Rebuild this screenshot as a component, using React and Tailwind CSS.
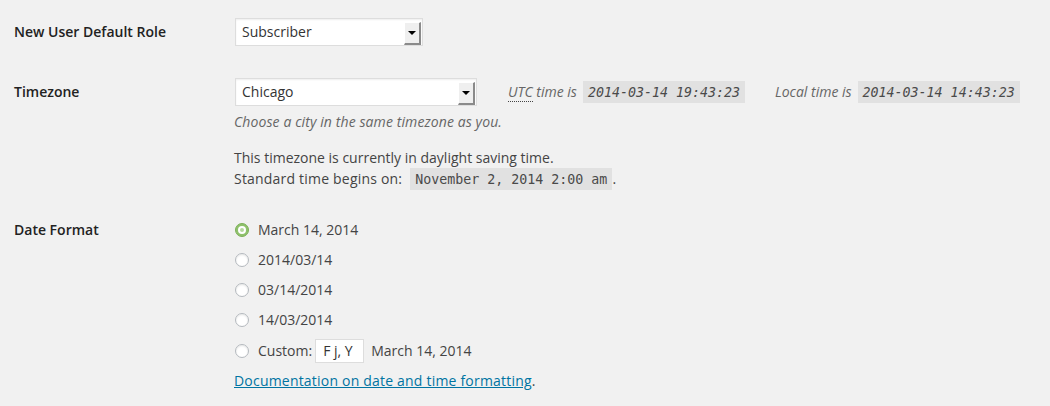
import React from "react";

const SelectBox = ({ value, width }) => (
  <div
    className={`relative h-[28px] bg-white border border-[#dddddd] shadow-[inset_0_1px_2px_rgba(0,0,0,0.07)] flex items-center pl-[6px] text-[#333] ${width}`}
  >
    {value}
    {/* old style dropdown button */}
    <div className="absolute right-[1px] top-[3px] bottom-0 w-[17px] bg-[#efefef] border-t border-l border-white border-r-2 border-b-2 border-r-[#8a8a8a] border-b-[#8a8a8a] flex items-center justify-center">
      <div className="w-0 h-0 border-l-[4px] border-r-[4px] border-t-[4px] border-l-transparent border-r-transparent border-t-black" />
    </div>
  </div>
);

const Code = ({ children, italic, className = "" }) => (
  <code
    className={`inline-block bg-[#e1e1e1] px-[5px] pt-[3px] pb-[2px] text-[13.3px] leading-[17px] font-normal text-[#4a4a4a] font-['DejaVu_Sans_Mono',monospace] ${italic ? "italic" : ""} ${className}`}
  >
    {children}
  </code>
);

const Radio = ({ checked }) =>
  checked ? (
    <span className="w-[14px] h-[14px] rounded-full bg-[#8fc16c] border border-[#7cb058] flex items-center justify-center mr-[9px] shrink-0">
      <span className="w-[8px] h-[8px] rounded-full bg-white flex items-center justify-center">
        <span className="w-[4px] h-[4px] rounded-full bg-[#b5d89c]" />
      </span>
    </span>
  ) : (
    <span className="w-[14px] h-[14px] rounded-full bg-white border border-[#b4b9be] shadow-[inset_0_1px_2px_rgba(0,0,0,0.1)] mr-[9px] shrink-0" />
  );

const dateFormats = [
  { label: "March 14, 2014", checked: true },
  { label: "2014/03/14" },
  { label: "03/14/2014" },
  { label: "14/03/2014" },
];

export default function App() {
  return (
    <div className="min-h-screen bg-[#f1f1f1] font-['Open_Sans',sans-serif] text-[14px] leading-5 text-[#444]">
      {/* New user role */}
      <div className="flex pt-[18px]">
        <div className="w-[235px] shrink-0 pl-[14px] h-[28px] flex items-center font-semibold text-[#222]">
          New User Default Role
        </div>
        <SelectBox value="Subscriber" width="w-[188px]" />
      </div>

      {/* Timezone */}
      <div className="flex mt-[32px]">
        <div className="w-[235px] shrink-0 pl-[14px] h-[28px] flex items-center font-semibold text-[#222]">
          Timezone
        </div>
        <div className="flex flex-col">
          <div className="flex items-center">
            <SelectBox value="Chicago" width="w-[242px]" />
            <span className="ml-[31px] italic text-[#666]">
              <abbr className="no-underline border-b border-dotted border-[#444]">UTC</abbr> time is
            </span>
            <span className="ml-[6px]">
              <Code italic>2014-03-14 19:43:23</Code>
            </span>
            <span className="ml-[30px] italic text-[#666]">Local time is</span>
            <span className="ml-[6px]">
              <Code italic>2014-03-14 14:43:23</Code>
            </span>
          </div>
          <p className="mt-[6px] italic text-[#666] -ml-[1px] tracking-[0.1px]">
            Choose a city in the same timezone as you.
          </p>
          <p className="mt-[16px] -ml-[1px]">This timezone is currently in daylight saving time.</p>
          <p className="-ml-[1px]">
            <span className="tracking-[0.2px]">Standard time begins on:</span>
            <Code className="ml-[8px]">November 2, 2014 2:00 am</Code>.
          </p>
        </div>
      </div>

      {/* Date format */}
      <div className="flex mt-[25px]">
        <div className="w-[235px] shrink-0 pl-[14px] h-[30px] flex items-center font-semibold text-[#222]">
          Date Format
        </div>
        <div className="flex flex-col">
          {dateFormats.map((f) => (
            <label key={f.label} className="h-[30px] flex items-center">
              <Radio checked={f.checked} />
              {f.label}
            </label>
          ))}
          <label className="h-[31px] flex items-center">
            <Radio />
            Custom:
            <span className="ml-[3px] w-[49px] h-[24px] bg-white border border-[#dddddd] flex items-center pl-[7px] text-[#333]">
              F j, Y
            </span>
            <span className="ml-[7px]">March 14, 2014</span>
          </label>
          <p className="mt-[5px] -ml-[1px]">
            <a href="#" className="text-[#0074a2] underline tracking-[0.2px]">
              Documentation on date and time formatting
            </a>
            .
          </p>
        </div>
      </div>
    </div>
  );
}
